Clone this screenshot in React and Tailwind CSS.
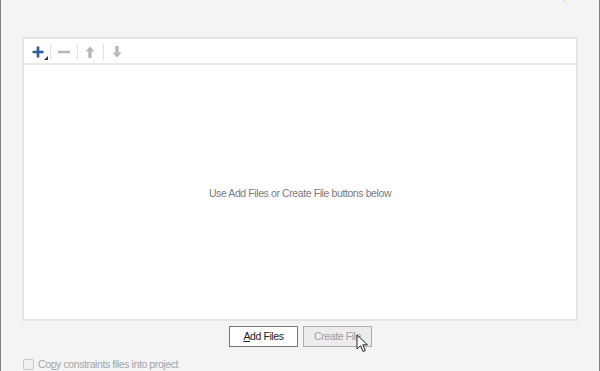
import React from "react";

function Sep({ cls }) {
  return <div className={"w-px h-[16px] bg-[#e2e2e2] " + cls} />;
}

export default function App() {
  return (
    <div
      className="relative w-[600px] h-[371px] bg-[#f4f4f4] border-l border-r border-[#7f7f7f] flex flex-col overflow-hidden"
      style={{ fontFamily: '"Liberation Sans", Arial, sans-serif' }}
    >
      <div className="absolute left-[563px] top-0 w-px h-[2px] bg-[#d8d890]" />
      <div className="h-[37px] shrink-0" />
      <div className="ml-[21px] w-[556px] h-[284px] border-2 border-[#e4e4e4] bg-white flex flex-col shrink-0">
        <div className="h-[26px] flex items-center pl-[6px] pt-[2px] border-b-2 border-[#e8e8e8] shrink-0">
          <div className="relative w-[20px] h-[16px] flex items-center">
            <svg width="14" height="14" viewBox="0 0 14 14" className="ml-[1px]">
              <path d="M7 1.5V12.5M1.5 7H12.5" stroke="#2f5b96" strokeWidth="2.6" />
            </svg>
            <svg width="4" height="4" viewBox="0 0 4 4" className="absolute left-[14px] top-[12px]">
              <path d="M4 0V4H0Z" fill="#333" />
            </svg>
          </div>
          <Sep cls="mr-[6px]" />
          <svg width="14" height="14" viewBox="0 0 14 14">
            <path d="M1 7H13" stroke="#b8b8b8" strokeWidth="2.4" />
          </svg>
          <Sep cls="ml-[6px] mr-[5px]" />
          <svg width="14" height="14" viewBox="0 0 14 14">
            <path d="M7 1.5L11.5 6.5H8.7V13H5.3V6.5H2.5Z" fill="#b8b8b8" />
          </svg>
          <Sep cls="ml-[6px] mr-[6px]" />
          <svg width="14" height="14" viewBox="0 0 14 14">
            <path d="M7 12.5L11.5 7.5H8.7V1H5.3V7.5H2.5Z" fill="#b8b8b8" />
          </svg>
        </div>
        <div className="flex-1 flex items-center justify-center pt-[3px]">
          <span className="text-[10.5px] tracking-[-0.4px] text-[#7a7a7a]">Use Add Files or Create File buttons below</span>
        </div>
      </div>
      <div className="flex justify-center gap-[5px] mt-[5px] pl-[1px] shrink-0">
        <button className="w-[69px] h-[21px] border border-[#7a7a7a] bg-white text-[10.5px] tracking-[-0.4px] text-[#222] flex items-center justify-center">
          <span><span className="underline">A</span>dd Files</span>
        </button>
        <button className="w-[69px] h-[21px] border border-[#adadad] bg-[#ececec] text-[10.5px] tracking-[-0.4px] text-[#9d9daa] flex items-center justify-center">
          Create File
        </button>
      </div>
      <div className="flex items-center mt-[10px] ml-[22px] shrink-0">
        <div className="w-[11px] h-[11px] border border-[#c8c8c8] rounded-[2px] bg-[#f0f0f0]" />
        <span className="ml-[4px] text-[10.5px] tracking-[-0.4px] text-[#a5a5a5]">
          Co<span className="underline">p</span>y constraints files into project
        </span>
      </div>
      <svg width="13" height="19" viewBox="0 0 13 19" className="absolute left-[355px] top-[334px]">
        <path d="M1 1V15L4.5 11.7L7 17.5L9.3 16.5L6.8 10.8H11.5Z" fill="#fff" stroke="#222" strokeWidth="1" strokeLinejoin="round" />
      </svg>
    </div>
  );
}
